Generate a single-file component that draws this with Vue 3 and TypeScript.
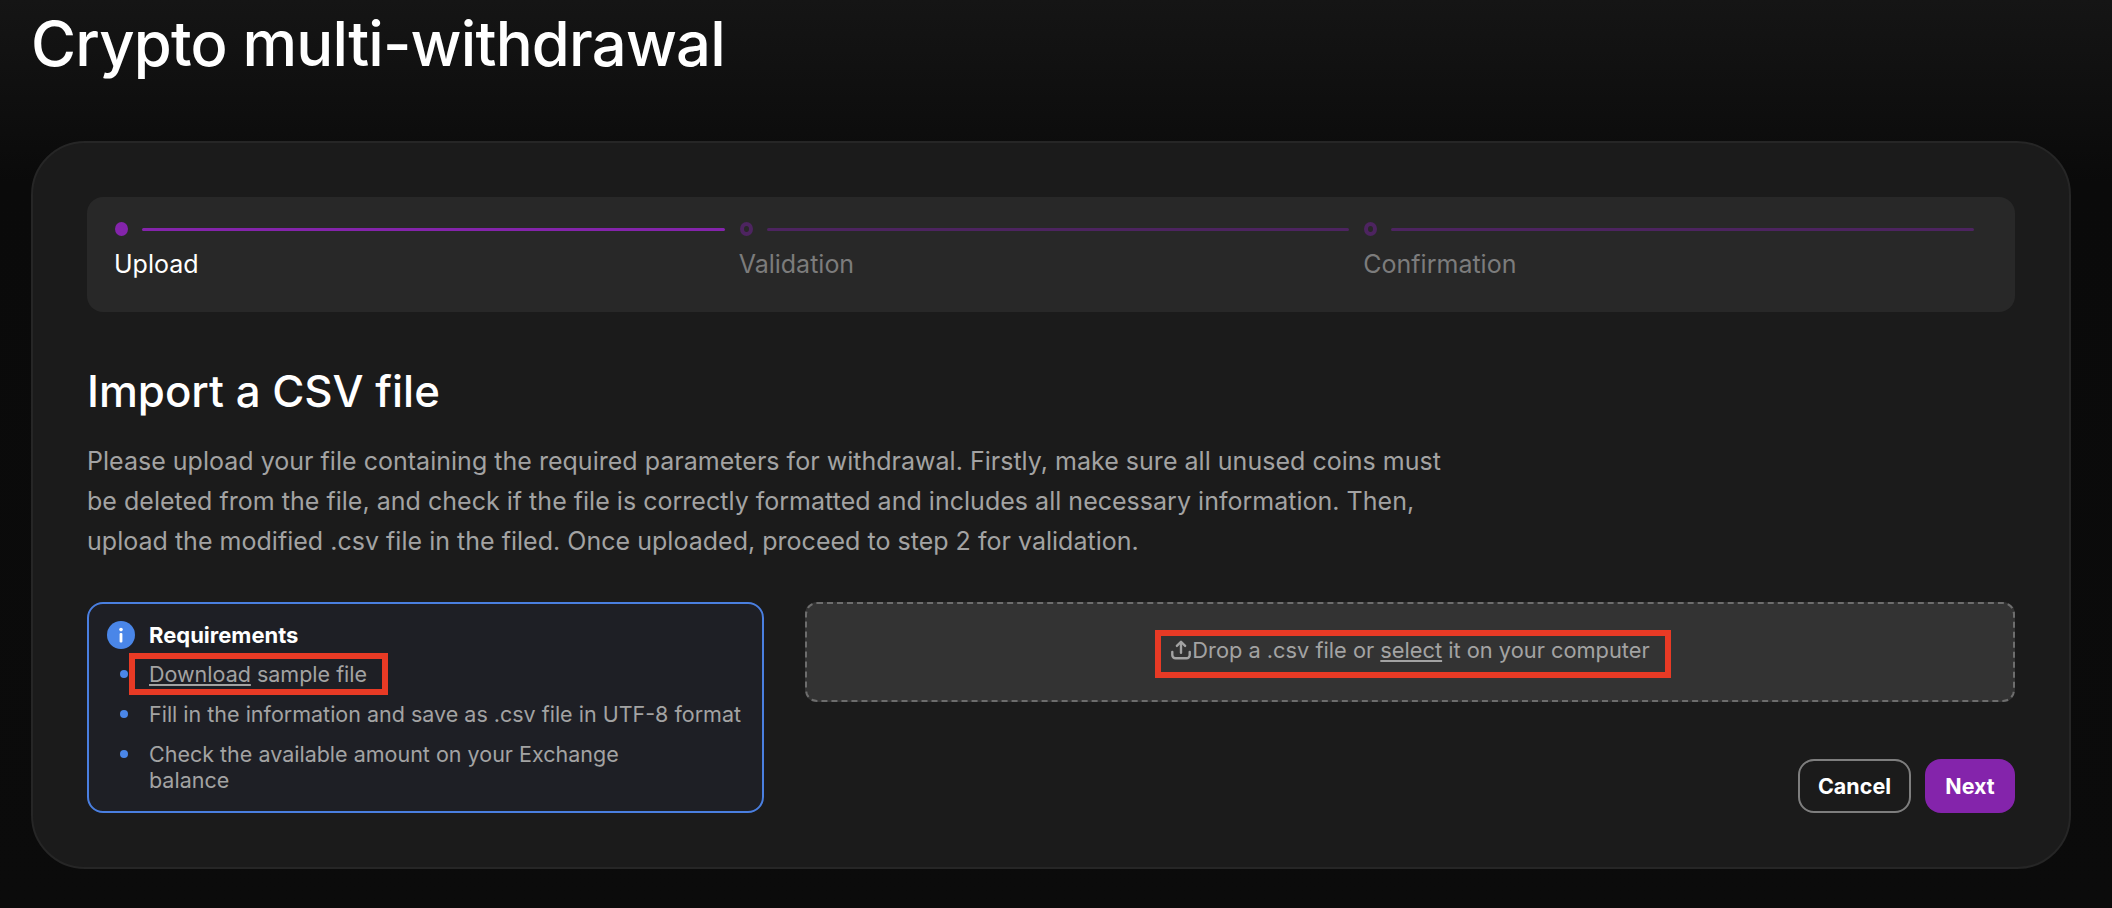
<script setup lang="ts">
const steps = [
  { label: 'Upload', active: true },
  { label: 'Validation', active: false },
  { label: 'Confirmation', active: false },
]
</script>

<template>
  <main class="page">
    <h1 class="title">Crypto multi-withdrawal</h1>
    <section class="card">
      <div class="stepper">
        <div v-for="s in steps" :key="s.label" class="step" :class="{ active: s.active }">
          <div class="track">
            <span class="dot"></span>
            <span class="line"></span>
          </div>
          <div class="label">{{ s.label }}</div>
        </div>
      </div>

      <h2 class="heading">Import a CSV file</h2>
      <p class="desc">
        Please upload your file containing the required parameters for withdrawal. Firstly, make sure all unused coins must be deleted from the file, and check if the file is correctly formatted and includes all necessary information. Then, upload the modified .csv file in the filed. Once uploaded, proceed to step 2 for validation.
      </p>

      <div class="columns">
        <aside class="req">
          <div class="req-head">
            <svg class="info" viewBox="0 0 28 28" width="28" height="28">
              <circle cx="14" cy="14" r="14" fill="#4a86e8" />
              <circle cx="14" cy="8.600" r="1.800" fill="#fff" />
              <rect x="12.600" y="12" width="2.800" height="9.500" rx="1" fill="#fff" />
            </svg>
            <strong>Requirements</strong>
          </div>
          <ul class="req-list">
            <li><span class="mark"><u>Download</u> sample file</span></li>
            <li>Fill in the information and save as .csv file in UTF-8 format</li>
            <li class="wrap">Check the available amount on your Exchange balance</li>
          </ul>
        </aside>

        <div class="right">
          <div class="drop">
            <span class="mark drop-text">
              <svg class="up" viewBox="0 0 24 24" width="22" height="22" fill="none" stroke="#a3a3a3" stroke-width="2.600" stroke-linecap="round" stroke-linejoin="round">
                <path d="M12 15V3.500" />
                <path d="M7.500 7.500 12 3l4.500 4.500" />
                <path d="M2.500 14v3.500A3.500 3.500 0 0 0 6 21h12a3.500 3.500 0 0 0 3.500-3.500V14" />
              </svg>
              <span>Drop a .csv file or <u>select</u> it on your computer</span>
            </span>
          </div>
          <div class="actions">
            <button class="btn ghost">Cancel</button>
            <button class="btn primary">Next</button>
          </div>
        </div>
      </div>
    </section>
  </main>
</template>

<style>
html, body { margin: 0; background: #0b0b0b; }
</style>

<style scoped>
.page {
  box-sizing: border-box;
  width: 2112px;
  height: 908px;
  padding: 0 41px 0 31px;
  overflow: hidden;
  background: linear-gradient(180deg, #151515 0%, #0a0a0a 20%, #0b0b0b 100%);
  font-family: Inter, "Noto Sans", sans-serif;
  color: #fff;
}
.title {
  margin: 0;
  padding-top: 6px;
  height: 141px;
  box-sizing: border-box;
  font-size: 61.500px;
  line-height: 76px;
  font-weight: 500;
  letter-spacing: -0.8px;
}
.card {
  box-sizing: border-box;
  height: 728px;
  padding: 54px 54px;
  background: #1b1b1b;
  border: 2px solid #262626;
  border-radius: 54px;
}
.stepper {
  display: flex;
  box-sizing: border-box;
  height: 115px;
  padding: 25px 26px 0 28px;
  background: #282828;
  border-radius: 16px;
}
.step { flex: 1 1 0; min-width: 0; }
.track { display: flex; align-items: center; gap: 14px; height: 14px; }
.dot {
  box-sizing: border-box;
  flex: none;
  width: 13px;
  height: 14px;
  border-radius: 50%;
  border: 4px solid #4d2460;
}
.line { flex: 1; height: 3px; margin-right: 15px; background: #4d2460; border-radius: 2px; }
.step.active .dot { background: #8424ab; border-color: #8424ab; }
.step.active .line { background: #8424ab; }
.label {
  margin: 12px 0 0 -1px;
  font-size: 25px;
  line-height: 32px;
  color: #7c7c7c;
}
.step.active .label { color: #fff; }
.heading {
  margin: 52px 0 0;
  font-size: 43.800px;
  line-height: 56px;
  font-weight: 500;
}
.desc {
  margin: 21px 0 0;
  width: 1380px;
  font-size: 25px;
  letter-spacing: 0.02px;
  line-height: 40px;
  color: #a3a3a3;
}
.columns { display: flex; gap: 41px; margin-top: 41px; }
.req {
  box-sizing: border-box;
  flex: none;
  width: 677px;
  height: 211px;
  padding: 17px 6px 16px 18px;
  background: #1e1f25;
  border: 2px solid #4a7fe0;
  border-radius: 16px;
}
.req-head { display: flex; align-items: center; gap: 14px; height: 28px; }
.req-head strong { font-size: 22px; font-weight: 700; }
.req-list {
  margin: 12px 0 0;
  padding: 0 0 0 42px;
  list-style: none;
  color: #a3a3a3;
  font-size: 21.500px;
  line-height: 26px;
}
.req-list li { position: relative; margin-bottom: 14px; }
.req-list li::before {
  content: "";
  position: absolute;
  left: -29px;
  top: 9px;
  width: 8px;
  height: 8px;
  border-radius: 50%;
  background: #4a86e8;
}
.req-list li.wrap { padding-right: 70px; }
.mark { position: relative; display: inline-block; }
.mark::after {
  content: "";
  position: absolute;
  border: 6px solid #e83a25;
  pointer-events: none;
}
.req-list .mark::after { inset: -8px -21px -8px -20px; }
.drop-text::after { inset: -7px -21px -15px -15px; }
.right { flex: 1; min-width: 0; }
.drop {
  display: flex;
  align-items: center;
  justify-content: center;
  box-sizing: border-box;
  height: 100px;
  padding-bottom: 4px;
  background: #333;
  border: 2px dashed #6d6d6d;
  border-radius: 12px;
  color: #a3a3a3;
  font-size: 21.800px;
}
.drop-text { display: flex; align-items: center; }
.actions { display: flex; justify-content: flex-end; gap: 14px; margin-top: 57px; }
.btn {
  box-sizing: border-box;
  height: 54px;
  border-radius: 16px;
  font-family: inherit;
  font-size: 21.500px;
  font-weight: 700;
  color: #fff;
}
.ghost { width: 113px; background: transparent; border: 2px solid #7e7e7e; }
.primary { width: 90px; background: #8424ab; border: 0; }
</style>
